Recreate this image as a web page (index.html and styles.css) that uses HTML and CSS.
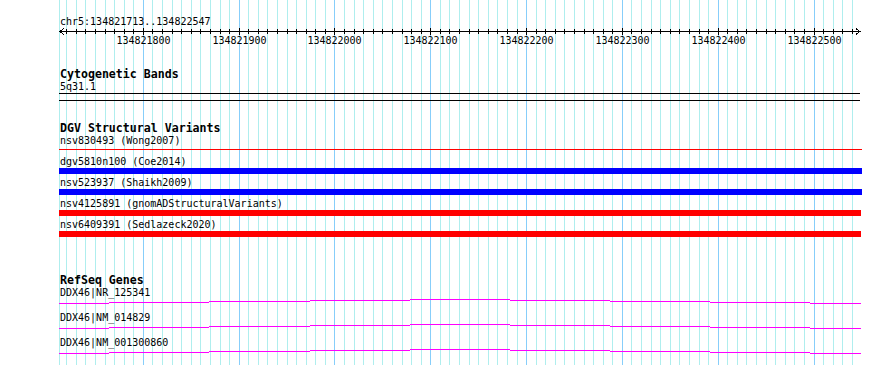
FILE: index.html
```html
<!DOCTYPE html>
<html lang="en">
<head>
    <meta charset="UTF-8">
    <meta name="viewport" content="width=device-width, initial-scale=1.0">
    <title>chr5:134821713..134822547</title>
    <link rel="stylesheet" href="styles.css">
</head>
<body>

<div class="browser">
    <svg class="grid" id="grid" width="890" height="365"></svg>

    <div class="ruler">
        <div class="label">chr5:134821713..134822547</div>
        <svg class="scale" id="scale" width="802" height="20" viewBox="59 0 802 20"></svg>
    </div>

    <div class="track cyto">
        <div class="track-title">Cytogenetic Bands</div>
        <div class="label">5q31.1</div>
        <div class="band"></div>
    </div>

    <div class="track dgv">
        <div class="track-title">DGV Structural Variants</div>
        <div class="feature">
            <div class="label">nsv830493 (Wong2007)</div>
            <div class="thin red"></div>
        </div>
        <div class="feature">
            <div class="label">dgv5810n100 (Coe2014)</div>
            <div class="bar blue"></div>
        </div>
        <div class="feature">
            <div class="label">nsv523937 (Shaikh2009)</div>
            <div class="bar blue"></div>
        </div>
        <div class="feature">
            <div class="label">nsv4125891 (gnomADStructuralVariants)</div>
            <div class="bar red short"></div>
        </div>
        <div class="feature">
            <div class="label">nsv6409391 (Sedlazeck2020)</div>
            <div class="bar red short"></div>
        </div>
    </div>

    <div class="track refseq">
        <div class="track-title">RefSeq Genes</div>
        <div class="transcript">
            <div class="label">DDX46|NR_125341</div>
            <svg class="intron" width="803" height="13" viewBox="59 0 803 13"><path d="M59 4.5H109M109 3.5H209M209 2.5H310M310 1.5H410M410 0.5H510M510 1.5H610M610 2.5H710M710 3.5H810M810 4.5H861"/></svg>
        </div>
        <div class="transcript">
            <div class="label">DDX46|NM_014829</div>
            <svg class="intron" width="803" height="13" viewBox="59 0 803 13"><path d="M59 4.5H109M109 3.5H209M209 2.5H310M310 1.5H410M410 0.5H510M510 1.5H610M610 2.5H710M710 3.5H810M810 4.5H861"/></svg>
        </div>
        <div class="transcript">
            <div class="label">DDX46|NM_001300860</div>
            <svg class="intron" width="803" height="13" viewBox="59 0 803 13"><path d="M59 4.5H109M109 3.5H209M209 2.5H310M310 1.5H410M410 0.5H510M510 1.5H610M610 2.5H710M710 3.5H810M810 4.5H861"/></svg>
        </div>
    </div>
</div>

<script>
    const start = 134821713;
    const end = 134822547;
    const scale = 800 / (end - start + 1);

    function px(pos) {
        return Math.floor(60 + (pos - start) * scale);
    }

    // grid lines every 10 bp, darker every 100 bp
    let grid = '<line class="minor" x1="59.5" y1="0" x2="59.5" y2="365"/>';
    let ticks = '<path class="axis" d="M60 3.5H860M64 0.5L60 3.5L64 6.5M856 0.5L860 3.5L856 6.5"/>';
    for (let pos = 134821720; pos <= end; pos += 10) {
        let x = px(pos) + 0.5;
        let major = pos % 100 === 0;
        grid += `<line class="${major ? 'major' : 'minor'}" x1="${x}" y1="0" x2="${x}" y2="365"/>`;
        if (major) {
            ticks += `<line class="tick" x1="${x}" y1="0" x2="${x}" y2="7"/>`;
            ticks += `<text x="${x}" y="15.5">${pos}</text>`;
        } else {
            ticks += `<line class="tick" x1="${x}" y1="1" x2="${x}" y2="6"/>`;
        }
    }
    document.getElementById("grid").innerHTML = grid;
    document.getElementById("scale").innerHTML = ticks;
</script>

</body>
</html>
```

FILE: styles.css
```css
body {
    margin: 0;
    background: #ffffff;
    color: #000000;
    font-family: "DejaVu Sans Mono", "Liberation Mono", monospace;
    font-size: 10px;
}
.browser {
    position: relative;
    z-index: 0;
    width: 890px;
    height: 365px;
    box-sizing: border-box;
    padding: 16px 0 0 60px;
    overflow: hidden;
}

/* background grid */
.grid {
    position: absolute;
    left: 0;
    top: 0;
    z-index: -1;
    shape-rendering: crispEdges;
}
.grid .minor {
    stroke: #afeeee;
    stroke-width: 1;
}
.grid .major {
    stroke: #87cefa;
    stroke-width: 1;
}

/* ruler */
.scale {
    display: block;
    margin-left: -1px;
    overflow: visible;
}
.scale .axis,
.scale .tick {
    stroke: #000000;
    stroke-width: 1;
    fill: none;
    shape-rendering: crispEdges;
}
.scale text {
    font-family: "DejaVu Sans Mono", "Liberation Mono", monospace;
    font-size: 10px;
    text-anchor: middle;
    fill: #000000;
}

/* tracks */
.label {
    height: 12px;
    line-height: 12px;
    white-space: nowrap;
}
.track-title {
    height: 13px;
    line-height: 13px;
    font-size: 11.6px;
    font-weight: bold;
    white-space: nowrap;
}
.cyto {
    margin-top: 20px;
}
.band {
    width: 801px;
    height: 6px;
    margin-left: -1px;
    border-top: 1px solid #000000;
    border-bottom: 1px solid #000000;
}
.dgv {
    margin-top: 21px;
}
.feature {
    padding-bottom: 3px;
}
.feature:last-child {
    padding-bottom: 0;
}
.bar {
    width: 803px;
    height: 6px;
    margin-left: -1px;
}
.bar.short {
    width: 802px;
}
.thin {
    width: 803px;
    height: 1px;
    margin: 2px 0 3px -1px;
}
.blue {
    background: #0000ff;
}
.red {
    background: #ff0000;
}
.refseq {
    margin-top: 37px;
}
.intron {
    display: block;
    margin-left: -1px;
    shape-rendering: crispEdges;
}
.intron path {
    stroke: #ff00ff;
    stroke-width: 1;
    fill: none;
}
```
